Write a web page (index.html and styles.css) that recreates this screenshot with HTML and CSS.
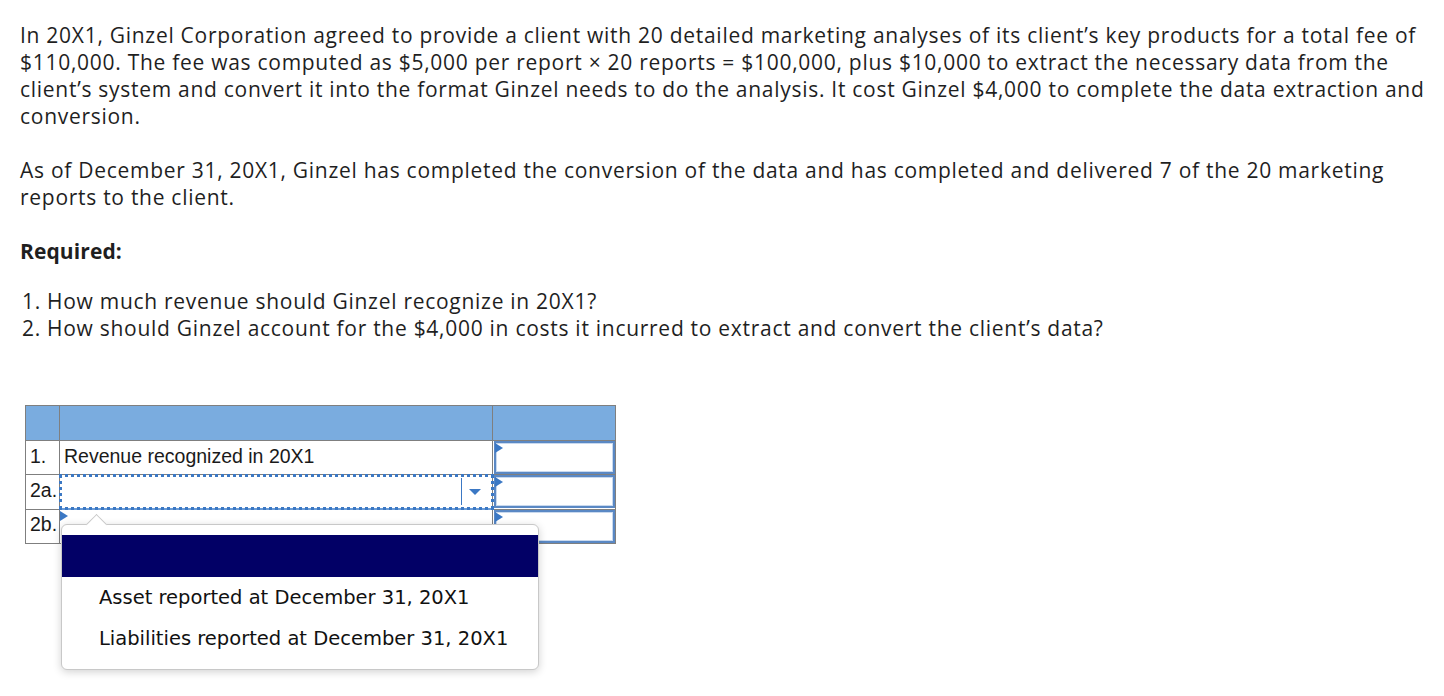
FILE: index.html
```html
<!DOCTYPE html>
<html>
<head>
<meta charset="utf-8">
<link rel="stylesheet" href="styles.css">
</head>
<body>
<div class="page">
  <p class="para">In 20X1, Ginzel Corporation agreed to provide a client with 20 detailed marketing analyses of its client’s key products for a total fee of<br>$110,000. The fee was computed as $5,000 per report × 20 reports = $100,000, plus $10,000 to extract the necessary data from the<br>client’s system and convert it into the format Ginzel needs to do the analysis. It cost Ginzel $4,000 to complete the data extraction and<br>conversion.</p>
  <p class="para">As of December 31, 20X1, Ginzel has completed the conversion of the data and has completed and delivered 7 of the 20 marketing<br>reports to the client.</p>
  <p class="req">Required:</p>
  <ol class="qlist">
    <li><span class="qn">1.</span><span>How much revenue should Ginzel recognize in 20X1?</span></li>
    <li><span class="qn">2.</span><span>How should Ginzel account for the $4,000 in costs it incurred to extract and convert the client’s data?</span></li>
  </ol>

  <div class="table-wrap">
    <table class="grid">
      <tr class="head"><td class="c-num"></td><td class="c-label"></td><td class="c-amt"></td></tr>
      <tr>
        <td class="c-num">1.</td>
        <td class="c-label">Revenue recognized in 20X1</td>
        <td class="c-amt"><div class="inp"><span class="flag"></span></div></td>
      </tr>
      <tr>
        <td class="c-num">2a.</td>
        <td class="c-label sel-cell focus"><div class="sel"><span class="sel-sep"></span><span class="sel-arrow"></span></div></td>
        <td class="c-amt"><div class="inp"><span class="flag"></span></div></td>
      </tr>
      <tr>
        <td class="c-num">2b.</td>
        <td class="c-label sel-cell open"><span class="flag flag-l"></span></td>
        <td class="c-amt"><div class="inp"><span class="flag"></span></div></td>
      </tr>
    </table>

    <div class="popup">
      <span class="caret"></span>
      <div class="opt-blank"></div>
      <div class="opt">Asset reported at December 31, 20X1</div>
      <div class="opt">Liabilities reported at December 31, 20X1</div>
    </div>
  </div>
</div>
</body>
</html>
```

FILE: styles.css
```css
html, body {
  margin: 0;
  padding: 0;
  background: #ffffff;
}

.page {
  min-height: 696px;
  box-sizing: border-box;
  padding: 22px 20px 0 20px;
  font-family: "Open Sans", "Liberation Sans", sans-serif;
  font-size: 21px;
  letter-spacing: 0.72px;
  line-height: 27px;
  color: #1f1f1f;
}

.para {
  margin: 0 0 27px 0;
  white-space: nowrap;
}

.req {
  margin: 0 0 23px 0;
  font-weight: 700;
  letter-spacing: 0.1px;
}

.qlist {
  list-style: none;
  margin: 0;
  padding: 0;
}

.qlist li {
  display: flex;
  white-space: nowrap;
}

.qn {
  width: 21px;
  text-align: right;
  margin-right: 6px;
}

.table-wrap {
  position: relative;
  margin: 63px 0 0 5px;
  width: 600px;
  letter-spacing: 0;
}

.grid {
  border-collapse: collapse;
  font-family: "Liberation Sans", Arial, sans-serif;
  font-size: 19.5px;
  color: #1a1a1a;
}

.grid td {
  border: 1px solid #7f7f7f;
  padding: 0 0 3px 0;
  height: 33px;
  box-sizing: border-box;
  vertical-align: middle;
}

.grid .head td {
  background: #7aacdf;
  height: 35px;
}

.c-num {
  width: 34px;
  padding-left: 4px !important;
}

.c-label {
  width: 433px;
  padding-left: 4px !important;
}

.c-amt {
  width: 123px;
  position: relative;
  padding: 0 !important;
}

.inp {
  position: relative;
  height: 29px;
  margin: 0 0 0 1px;
  border: 2px solid #5a88c4;
  box-shadow: inset 0 0 0 1px #c9d9ee;
}

.flag {
  position: absolute;
  left: -1px;
  top: 0;
  width: 0;
  height: 0;
  border-top: 5px solid transparent;
  border-bottom: 5px solid transparent;
  border-left: 8px solid #3b78c4;
}

.sel-cell {
  position: relative;
  padding-bottom: 0 !important;
}

.focus {
  outline: 3px dotted #3b78c4;
  outline-offset: -2px;
}

.sel {
  position: relative;
  height: 33px;
}

.sel-sep {
  position: absolute;
  right: 30px;
  top: 3px;
  bottom: 3px;
  width: 1px;
  background: #3b78c4;
}

.sel-arrow {
  position: absolute;
  right: 11px;
  top: 14px;
  width: 0;
  height: 0;
  border-left: 6px solid transparent;
  border-right: 6px solid transparent;
  border-top: 6px solid #3b78c4;
}

.open {
  border-top: 2px solid #6a9bd6 !important;
}

.flag-l {
  left: 0;
  top: 1px;
}

.popup {
  position: absolute;
  left: 36px;
  top: 119px;
  width: 476px;
  padding: 10px 0 10px 0;
  background: #ffffff;
  border: 1px solid #c8c8c8;
  border-radius: 6px;
  box-shadow: 0 2px 8px rgba(0, 0, 0, 0.18);
  font-family: "DejaVu Sans", Verdana, sans-serif;
  font-size: 19.5px;
  color: #111111;
}

.caret {
  position: absolute;
  left: 27px;
  top: -8px;
  width: 14px;
  height: 14px;
  background: #ffffff;
  border-left: 1px solid #c8c8c8;
  border-top: 1px solid #c8c8c8;
  transform: rotate(45deg);
}

.opt-blank {
  position: relative;
  height: 42px;
  background: #020066;
}

.opt {
  padding: 0 0 0 37px;
  height: 41px;
  line-height: 41px;
}
```
